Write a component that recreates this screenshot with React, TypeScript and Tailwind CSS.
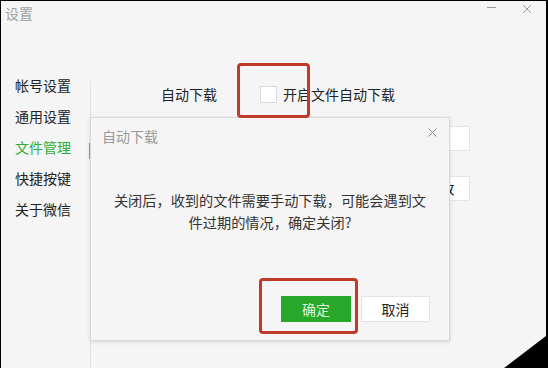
import React from 'react'

const font = { fontFamily: '"Noto Sans CJK SC", "Noto Sans", sans-serif' }

const menu = ['帐号设置', '通用设置', '文件管理', '快捷按键', '关于微信']

export default function App() {
  return (
    <div
      className="relative w-[548px] h-[368px] overflow-hidden bg-[#f5f5f5] border-t border-l border-r-2 border-black text-[#333]"
      style={font}
    >
      {/* title bar */}
      <div className="flex h-[24px] items-start">
        <span className="ml-[4px] mt-[2px] text-[14px] leading-[20px] text-[#a0a0a0]">设置</span>
        <div className="ml-auto flex items-start">
          <div className="mt-[6px] h-px w-[9px] bg-[#9a9a9a]" />
          <svg className="ml-[26px] mt-[3px]" width="10" height="10" viewBox="0 0 10 10">
            <path d="M1 1 L9 9 M9 1 L1 9" stroke="#9a9a9a" strokeWidth="1" fill="none" />
          </svg>
          <div className="w-[14px]" />
        </div>
      </div>

      {/* body */}
      <div className="flex h-[343px]">
        <div className="w-[89px] pt-[45px] pl-[14px] flex flex-col">
          {menu.map((m) => (
            <div
              key={m}
              className={
                m === '文件管理'
                  ? 'h-[31px] leading-[31px] text-[14px] text-[#2cae38]'
                  : 'h-[31px] leading-[31px] text-[14px] text-[#222]'
              }
            >
              {m}
            </div>
          ))}
        </div>
        <div className="relative mt-[56px] w-px bg-[#e2e2e2]">
          <div className="absolute left-[-1px] top-[62px] h-[16px] w-px bg-[#5cc062]" />
        </div>

        <div className="flex flex-col pl-[70px] pt-[59px]">
          <div className="flex h-[20px] items-center">
            <span className="text-[14px] text-[#222]">自动下载</span>
            <div className="ml-[43px] h-[17px] w-[17px] border border-[#dadada] bg-white" />
            <span className="ml-[6px] text-[14px] text-[#222]">开启文件自动下载</span>
          </div>
          <div className="ml-[98px] mt-[22px] h-[25px] w-[211px] border border-[#e4e4e4] bg-white" />
          <div className="ml-[250px] mt-[25px] flex h-[25px] w-[59px] items-center justify-center border border-[#e4e4e4] bg-white text-[14px] text-[#222]">
            更改
          </div>
        </div>
      </div>

      {/* dialog */}
      <div className="absolute left-[89px] top-[116px] flex h-[224px] w-[360px] flex-col border border-[#d8d8d8] bg-[#f5f5f5] shadow-[0_1px_4px_rgba(0,0,0,0.12)]">
        <div className="flex h-[36px] items-center pl-[11px] pr-[12px]">
          <span className="text-[14px] text-[#999]">自动下载</span>
          <svg className="ml-auto -mt-[8px]" width="9" height="9" viewBox="0 0 9 9">
            <path d="M0.5 0.5 L8.5 8.5 M8.5 0.5 L0.5 8.5" stroke="#8a8a8a" strokeWidth="1" fill="none" />
          </svg>
        </div>
        <div className="mt-[35px] flex justify-center">
          <p className="whitespace-nowrap text-center text-[14.2px] leading-[22px] text-[#333]">
            关闭后，收到的文件需要手动下载，可能会遇到文
            <br />
            件过期的情况，确定关闭?
          </p>
        </div>
        <div className="mt-auto mb-[18px] flex justify-end gap-[10px] pr-[19px]">
          <div className="flex h-[26px] w-[70px] items-center justify-center bg-[#28a828] text-[14px] text-[#dcf5dc]">
            确定
          </div>
          <div className="flex h-[26px] w-[69px] items-center justify-center border border-[#e4e4e4] bg-white text-[14px] text-[#222]">
            取消
          </div>
        </div>
      </div>

      {/* annotations */}
      <div className="absolute left-[236px] top-[62px] h-[55px] w-[73px] rounded-[4px] border-[3px] border-[#c0392b]" />
      <div className="absolute left-[258px] top-[277px] h-[56px] w-[99px] rounded-[4px] border-[3px] border-[#c0392b]" />

      {/* black corner */}
      <svg className="absolute right-0 bottom-0" width="42" height="32" viewBox="0 0 42 32">
        <polygon points="0,32 42,0 42,32" fill="#000" />
      </svg>
    </div>
  )
}
